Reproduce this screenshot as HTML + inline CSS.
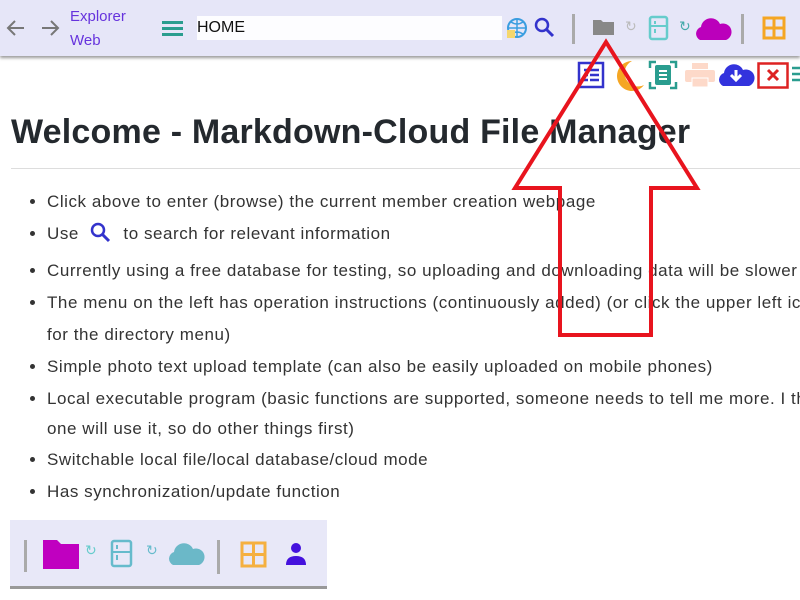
<!DOCTYPE html>
<html><head><meta charset="utf-8"><style>
body{margin:0;width:800px;height:600px;overflow:hidden;background:#fff;font-family:"Liberation Sans",sans-serif;position:relative;color:#333}
.hdr{position:absolute;left:0;top:0;width:800px;height:56px;background:#e6e6f8;box-shadow:0 2px 3px #999}
.abs{position:absolute}
h1{position:absolute;left:11px;top:113px;margin:0;font-size:34px;font-weight:bold;color:#24292e;white-space:nowrap;letter-spacing:0.2px}
.hr{position:absolute;left:11px;top:168px;width:789px;height:1px;background:#ddd}
ul{position:absolute;left:20px;top:186px;margin:0;padding-left:27px;font-size:17px;color:#333;line-height:32px;width:753px;overflow:hidden;white-space:nowrap;letter-spacing:0.55px}
li{margin:0}
</style></head><body>
<div class="hdr"></div>
<svg class="abs" style="left:4px;top:16px" width="60" height="24" viewBox="0 0 60 24"><path d="M20 12H4M11 5L4 12L11 19" stroke="#777" stroke-width="2" fill="none"/><path d="M38 12H54M47 5L54 12L47 19" stroke="#777" stroke-width="2" fill="none"/></svg>
<div class="abs" style="left:70px;top:5px;font-size:15px;color:#6633dd;line-height:24px">Explorer<br>Web</div>
<svg class="abs" style="left:162px;top:19px" width="22" height="18"><rect x="0" y="2" width="21" height="3" fill="#2a9d8f"/><rect x="0" y="8" width="21" height="3" fill="#2a9d8f"/><rect x="0" y="14" width="21" height="3" fill="#2a9d8f"/></svg>
<div class="abs" style="left:197px;top:16px;width:305px;height:24px;background:#fdfdff;font-size:16px;line-height:24px;color:#111">HOME</div>
<svg class="abs" style="left:505px;top:16px" width="24" height="24"><circle cx="12" cy="12" r="9" fill="none" stroke="#3a9de0" stroke-width="2"/><path d="M3 12h18M12 3v18M6 6q6 4 12 0M6 18q6-4 12 0" stroke="#3a9de0" stroke-width="1.5" fill="none"/><rect x="2" y="14" width="8" height="8" fill="#f5d76e"/></svg>
<svg class="abs" style="left:532px;top:15px" width="24" height="24"><circle cx="10" cy="10" r="6" fill="none" stroke="#3333cc" stroke-width="2.5"/><path d="M14 14l7 7" stroke="#3333cc" stroke-width="3"/></svg>
<div class="abs" style="left:572px;top:14px;width:3px;height:30px;background:#aaa"></div>
<svg class="abs" style="left:592px;top:17px" width="24" height="20"><path d="M1 3h8l2 2h11v13H1z" fill="#888"/></svg>
<div class="abs" style="left:625px;top:18px;font-size:14px;color:#bbb">↻</div>
<svg class="abs" style="left:648px;top:15px" width="22" height="26"><rect x="2" y="2" width="17" height="22" rx="2" fill="none" stroke="#6cc" stroke-width="2.5"/><path d="M2 11h17M7 6v3M7 14v4" stroke="#6cc" stroke-width="2"/></svg>
<div class="abs" style="left:679px;top:18px;font-size:14px;color:#4aa">↻</div>
<svg class="abs" style="left:694px;top:14px" width="40" height="28"><path d="M6 26a7 7 0 0 1 1-13a10 10 0 0 1 19-3a8 8 0 0 1 6 16z" fill="#bb00bb"/></svg>
<div class="abs" style="left:741px;top:14px;width:3px;height:30px;background:#aaa"></div>
<svg class="abs" style="left:762px;top:16px" width="24" height="24"><rect x="2" y="2" width="20" height="20" fill="none" stroke="#f5a623" stroke-width="3"/><path d="M12 2v20M2 12h20" stroke="#f5a623" stroke-width="3"/></svg>
<svg class="abs" style="left:577px;top:61px" width="28" height="28"><rect x="2" y="2" width="24" height="24" fill="none" stroke="#3333cc" stroke-width="2.5"/><path d="M7 9h4M13 9h9M7 14h4M13 14h9M7 19h4M13 19h9" stroke="#3333cc" stroke-width="2.5"/></svg>
<svg class="abs" style="left:610px;top:58px" width="36" height="34"><path d="M22 3a15 15 0 1 0 12 24a12 12 0 0 1-12-24z" fill="#f5a623"/></svg>
<svg class="abs" style="left:648px;top:60px" width="30" height="30"><path d="M2 8V2h6M22 2h6v6M28 22v6h-6M8 28H2v-6" stroke="#2a9d8f" stroke-width="2.5" fill="none"/><rect x="7" y="5" width="16" height="20" rx="2" fill="#2a9d8f"/><path d="M11 11h8M11 15h8M11 19h8" stroke="#fff" stroke-width="2"/></svg>
<svg class="abs" style="left:684px;top:62px" width="32" height="26"><rect x="8" y="1" width="16" height="6" fill="#fdd9c9"/><rect x="1" y="8" width="30" height="12" rx="2" fill="#fdd9c9"/><rect x="8" y="16" width="16" height="9" fill="#fdd9c9" stroke="#fff"/></svg>
<svg class="abs" style="left:717px;top:60px" width="38" height="28"><path d="M6 26a7 7 0 0 1 1-13a10 10 0 0 1 19-3a8 8 0 0 1 6 16z" fill="#3333dd"/><path d="M19 10v10M14 15l5 5l5-5" stroke="#fff" stroke-width="3" fill="none"/></svg>
<svg class="abs" style="left:757px;top:62px" width="32" height="27"><rect x="1.5" y="1.5" width="29" height="24" fill="none" stroke="#dd2222" stroke-width="2.5"/><path d="M11 8l10 10M21 8l-10 10" stroke="#dd2222" stroke-width="3"/></svg>
<svg class="abs" style="left:792px;top:66px" width="8" height="18"><path d="M0 2h8M0 8h8M0 14h8" stroke="#2a9d8f" stroke-width="2.5"/></svg>
<h1>Welcome - Markdown-Cloud File Manager</h1>
<div class="hr"></div>
<ul>
<li>Click above to enter (browse) the current member creation webpage</li>
<li>Use <svg width="26" height="24" style="vertical-align:-5px;margin:0 4px"><circle cx="10" cy="10" r="6" fill="none" stroke="#3333cc" stroke-width="2.5"/><path d="M14 14l7 7" stroke="#3333cc" stroke-width="3"/></svg> to search for relevant information</li>
<li style="margin-top:5px">Currently using a free database for testing, so uploading and downloading data will be slower</li>
<li>The menu on the left has operation instructions (continuously added) (or click the upper left icon<br>for the directory menu)</li>
<li>Simple photo text upload template (can also be easily uploaded on mobile phones)</li>
<li style="line-height:30px;margin-top:1px">Local executable program (basic functions are supported, someone needs to tell me more. I think no<br>one will use it, so do other things first)</li>
<li>Switchable local file/local database/cloud mode</li>
<li>Has synchronization/update function</li>
</ul>
<div class="abs" style="left:10px;top:520px;width:317px;height:66px;background:#e8e8f8;border-bottom:3px solid #999"></div>
<div class="abs" style="left:24px;top:540px;width:3px;height:32px;background:#aaa"></div>
<svg class="abs" style="left:42px;top:537px" width="40" height="34"><path d="M1 3h14l4 4h18v25H1z" fill="#c000c0"/></svg>
<div class="abs" style="left:85px;top:542px;font-size:14px;color:#6cc">↻</div>
<svg class="abs" style="left:110px;top:539px" width="24" height="30"><rect x="2" y="2" width="19" height="25" rx="2" fill="none" stroke="#6bc" stroke-width="2.5"/><path d="M2 13h19M7 6v4M7 16v5" stroke="#6bc" stroke-width="2"/></svg>
<div class="abs" style="left:146px;top:542px;font-size:14px;color:#6bc">↻</div>
<svg class="abs" style="left:167px;top:540px" width="38" height="26"><path d="M6 25a7 7 0 0 1 1-13a10 10 0 0 1 19-3a8 8 0 0 1 6 16z" fill="#6bb8c8"/></svg>
<div class="abs" style="left:217px;top:540px;width:3px;height:34px;background:#aaa"></div>
<svg class="abs" style="left:240px;top:541px" width="28" height="28"><rect x="2" y="2" width="23" height="23" fill="none" stroke="#f5b040" stroke-width="3"/><path d="M13.5 2v23M2 13.5h23" stroke="#f5b040" stroke-width="3"/></svg>
<svg class="abs" style="left:284px;top:541px" width="24" height="26"><circle cx="12" cy="7" r="5" fill="#4411dd"/><path d="M2 24q0-9 10-9t10 9z" fill="#4411dd"/></svg>
<svg class="abs" style="left:0;top:0" width="800" height="600"><polygon points="606,42 515,188 560,188 560,335 651,335 651,188 697,188" fill="none" stroke="#e8141e" stroke-width="4"/></svg>
</body></html>
